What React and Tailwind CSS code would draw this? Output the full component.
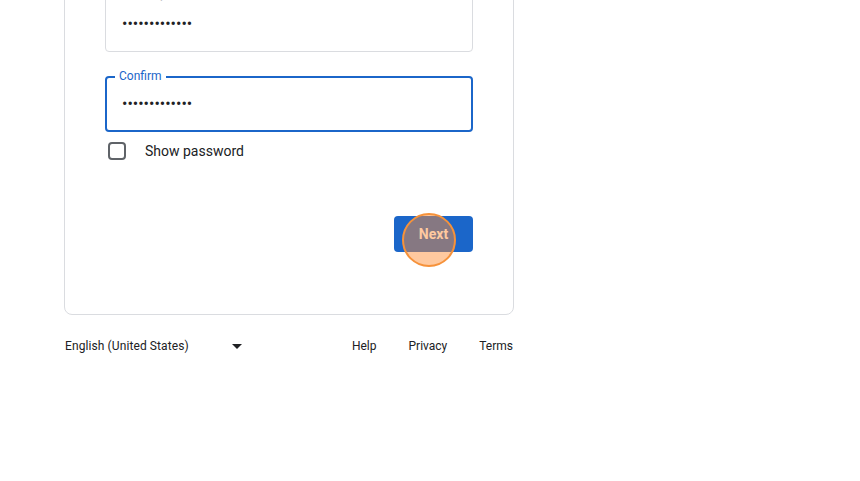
import React from "react";

function App() {
  const dots = "•••••••••••••";
  return (
    <div
      className="min-h-screen w-full overflow-hidden bg-white text-[#202124]"
      style={{ fontFamily: "Roboto, 'Liberation Sans', Arial, sans-serif" }}
    >
      <div className="ml-16 -mt-[45px] w-[450px]">
        <div className="rounded-lg border border-[#dadce0] px-10 pt-10 pb-[62px]">
          {/* password */}
          <div className="relative flex h-14 items-center rounded border border-[#dadce0] px-4">
            <span className="absolute -top-[11px] left-3 bg-white px-1 text-xs text-[#5f6368] opacity-40">
              Create password
            </span>
            <span className="text-base">{dots}</span>
          </div>

          {/* confirm */}
          <div className="relative mt-6 flex h-14 items-center rounded border-2 border-[#1b66c9] px-[15px]">
            <span className="absolute -top-[10px] left-2 bg-white px-1 text-xs text-[#1b66c9]">
              Confirm
            </span>
            <span className="text-base">{dots}</span>
          </div>

          {/* show password */}
          <label className="mt-[9px] flex items-center">
            <span className="ml-[3px] h-[18px] w-[18px] rounded-sm border-2 border-[#5f6368]"></span>
            <span className="ml-[19px] text-sm">Show password</span>
          </label>

          <div className="mt-[55px] flex justify-end">
            <div className="relative">
              <button className="h-9 w-[79px] rounded bg-[#1b66c9] text-sm font-bold text-white">
                Next
              </button>
              <span className="pointer-events-none absolute left-[8px] -top-[3.5px] h-[54px] w-[54px] rounded-full border-2 border-[#f6923a] bg-[rgba(255,140,50,0.47)]"></span>
            </div>
          </div>
        </div>

        {/* footer */}
        <div className="mt-[23px] flex h-4 items-center text-xs text-[#202124]">
          <div className="flex items-center tracking-[0.1px]">
            <span className="ml-px">English (United States)</span>
            <svg className="ml-[43px]" width="10" height="5" viewBox="0 0 10 5">
              <path d="M0 0 L10 0 L5 5 Z" fill="#202124" />
            </svg>
          </div>
          <div className="ml-auto mr-px flex items-center gap-8">
            <a>Help</a>
            <a>Privacy</a>
            <a>Terms</a>
          </div>
        </div>
      </div>
    </div>
  );
}

export default App;
